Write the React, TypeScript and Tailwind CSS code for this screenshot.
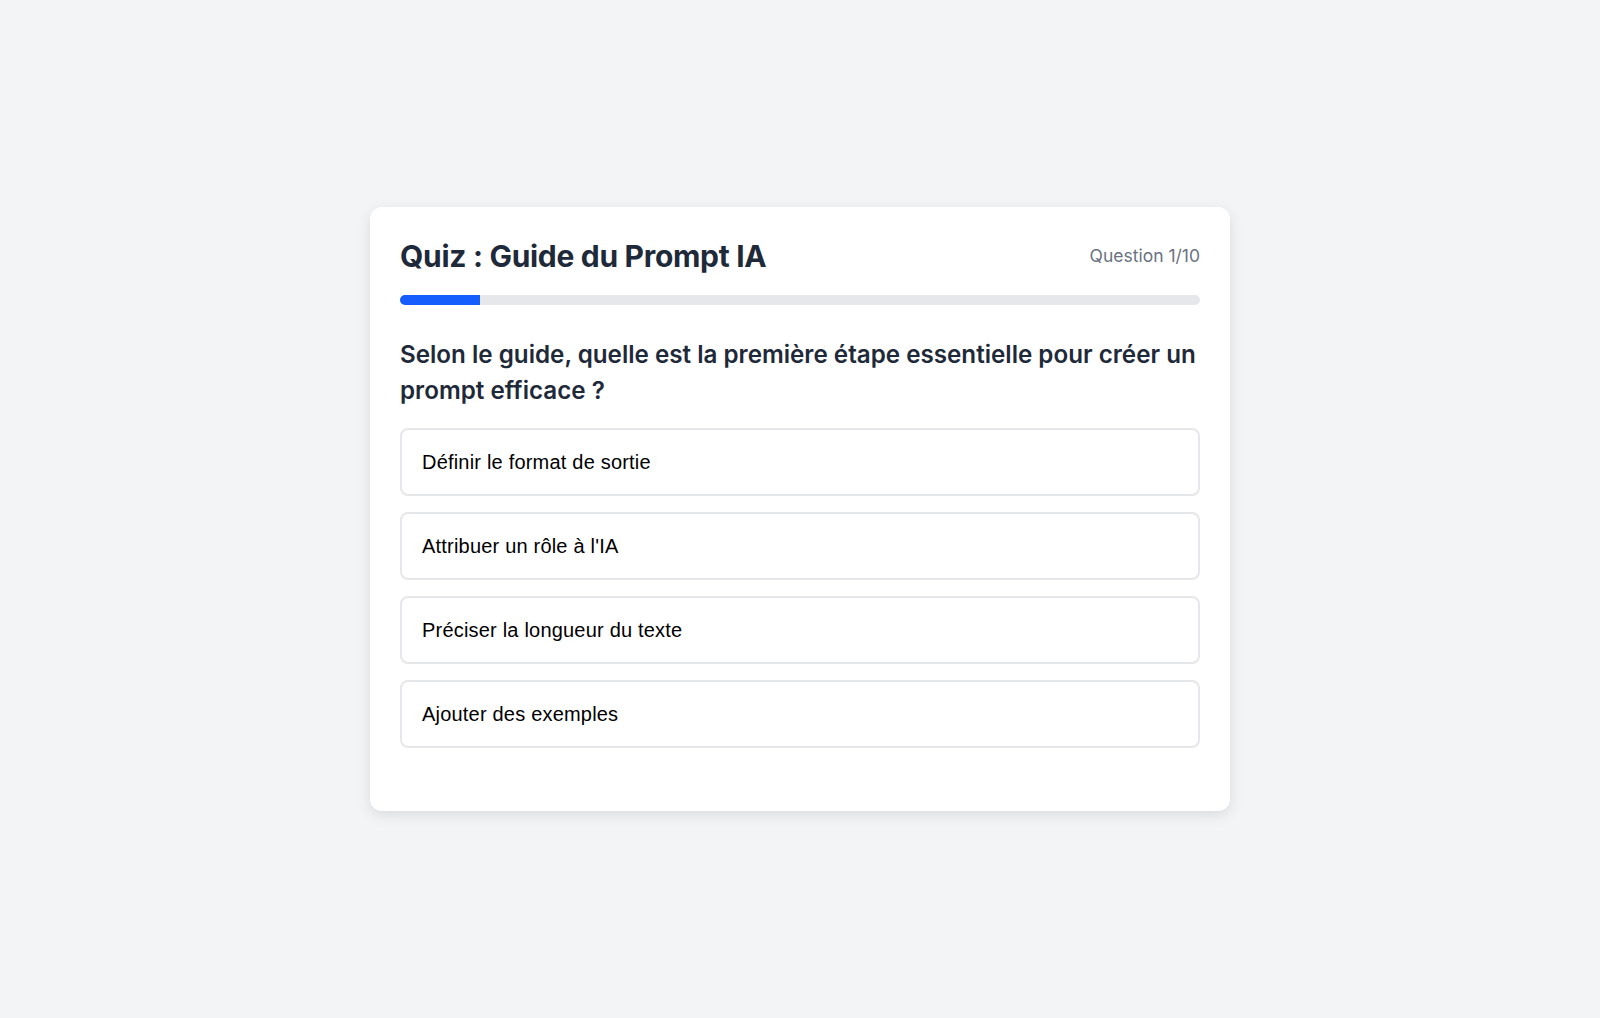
import React, { useState } from 'react';

const options = [
  'Définir le format de sortie',
  "Attribuer un rôle à l'IA",
  'Préciser la longueur du texte',
  'Ajouter des exemples',
];

const App: React.FC = () => {
  const [selected, setSelected] = useState<number | null>(null);
  const current = 1;
  const total = 10;

  return (
    <div className="min-h-screen bg-gray-100 flex items-center justify-center font-['Inter',sans-serif]">
      <div className="w-[860px] bg-white rounded-xl shadow-[0_4px_14px_rgba(0,0,0,0.1)] p-[30px]">
        {/* Header */}
        <div className="flex items-center justify-between mb-5">
          <h1 className="text-[30px] leading-[38px] font-bold text-gray-800 tracking-[-0.01em]">
            Quiz : Guide du Prompt IA
          </h1>
          <span className="text-[17.5px] text-gray-500">
            Question {current}/{total}
          </span>
        </div>

        {/* Progress */}
        <div className="h-2.5 w-full bg-gray-200 rounded-full overflow-hidden">
          <div className="h-full bg-blue-600" style={{ width: `${(current / total) * 100}%` }} />
        </div>

        {/* Question */}
        <h2 className="mt-[32px] text-[24.2px] leading-9 font-semibold text-gray-800">
          Selon le guide, quelle est la première étape essentielle pour créer un prompt efficace ?
        </h2>

        {/* Options */}
        <div className="mt-[19px] mb-[33px] flex flex-col gap-4">
          {options.map((opt, i) => (
            <button
              key={opt}
              onClick={() => setSelected(i)}
              className={`w-full text-left px-5 py-[18px] border-2 rounded-lg text-[20px] leading-7 tracking-[0.2px] text-black font-['Liberation_Sans',Arial,sans-serif] ${
                selected === i ? 'border-blue-600 bg-blue-50' : 'border-gray-200 bg-white'
              }`}
            >
              {opt}
            </button>
          ))}
        </div>
      </div>
    </div>
  );
};

export default App;
